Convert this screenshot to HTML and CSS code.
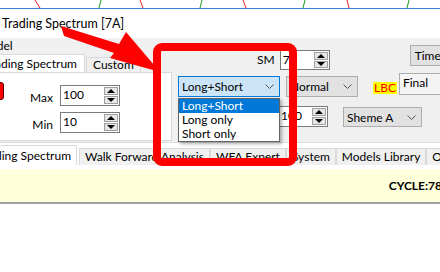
FILE: index.html
```html
<!DOCTYPE html>
<html>
<head>
    <meta charset="UTF-8">
    <title>Trading Spectrum [7A]</title>
    <link rel="stylesheet" href="styles.css">
</head>
<body>
    <div class="chart">
        <svg width="440" height="8" viewBox="0 0 440 8">
            <line x1="35" y1="0" x2="40" y2="8" stroke="#e22" />
            <line x1="101" y1="0" x2="99" y2="8" stroke="#1a9a1a" />
            <line x1="140" y1="0" x2="143" y2="8" stroke="#e22" />
            <line x1="202" y1="0" x2="200" y2="8" stroke="#1a9a1a" />
            <line x1="243" y1="0" x2="246" y2="8" stroke="#e22" />
            <line x1="305" y1="0" x2="303" y2="8" stroke="#1a9a1a" />
            <line x1="347" y1="0" x2="349" y2="8" stroke="#e22" />
            <line x1="409" y1="0" x2="407" y2="8" stroke="#1a9a1a" />
        </svg>
    </div>
    <div class="titlebar">Trading Spectrum [7A]</div>

    <div class="main">
        <div class="left">
            <div class="group-label">Model</div>
            <div class="tabs top-tabs">
                <div class="tab active first">Trading Spectrum</div>
                <div class="tab">Custom</div>
            </div>
            <div class="page">
                <div class="flag"></div>
                <div class="fields">
                    <label>Max</label>
                    <div class="num"><span>100</span><div class="spinbtns"><div class="sb"><i class="up"></i></div><div class="sb"><i class="down"></i></div></div></div>
                    <label>Min</label>
                    <div class="num"><span>10</span><div class="spinbtns"><div class="sb"><i class="up"></i></div><div class="sb"><i class="down"></i></div></div></div>
                </div>
            </div>
        </div>

        <div class="right">
            <div class="row row1">
                <label class="sm-label">SM</label>
                <div class="num sm"><span>7</span><div class="spinbtns"><div class="sb"><i class="up"></i></div><div class="sb"><i class="down"></i></div></div></div>
                <div class="button time">Time</div>
            </div>
            <div class="row row2">
                <div class="combo focused direction"><span>Long+Short</span><svg width="9" height="5"><polyline points="0.5,0.5 4.5,4.5 8.5,0.5" fill="none" stroke="#555" /></svg></div>
                <div class="combo mode"><span>Normal</span><svg width="9" height="5"><polyline points="0.5,0.5 4.5,4.5 8.5,0.5" fill="none" stroke="#555" /></svg></div>
                <span class="lbc">LBC</span>
                <div class="combo edit final"><span>Final</span></div>
            </div>
            <div class="row row3">
                <div class="num period"><span>100</span><div class="spinbtns"><div class="sb"><i class="up"></i></div><div class="sb"><i class="down"></i></div></div></div>
                <div class="combo scheme"><span>Sheme A</span><svg width="9" height="5"><polyline points="0.5,0.5 4.5,4.5 8.5,0.5" fill="none" stroke="#555" /></svg></div>
            </div>
        </div>
    </div>

    <div class="tabs bottom-tabs">
        <div class="tab active first">Trading Spectrum</div>
        <div class="tab">Walk Forward Analysis</div>
        <div class="tab">WFA Expert</div>
        <div class="tab">System</div>
        <div class="tab">Models Library</div>
        <div class="tab">Optimization</div>
    </div>

    <div class="status"><b>CYCLE:78</b></div>

    <!-- open list of the Long+Short combo -->
    <div class="dropdown">
        <div class="item selected">Long+Short</div>
        <div class="item">Long only</div>
        <div class="item">Short only</div>
    </div>

    <!-- annotation drawn over the screenshot -->
    <div class="highlight"></div>
    <svg class="arrow" width="440" height="272" viewBox="0 0 440 272">
        <polygon points="61,26 119,44 126,32 160,72 110,58 114,53 64,36" fill="#f00" />
    </svg>
</body>
</html>
```

FILE: styles.css
```css
body {
    margin: 0;
    width: 440px;
    height: 272px;
    overflow: hidden;
    position: relative;
    background: #fff;
    color: #000;
    font-family: Lato, "Noto Sans", sans-serif;
    font-size: 12px;
}
.chart {
    height: 8px;
    border-bottom: 1px solid #3b83d6;
}
.chart svg {
    display: block;
}
.titlebar {
    height: 29px;
    line-height: 29px;
    padding-left: 2px;
    font-size: 12.5px;
}
.main {
    display: flex;
    height: 104px;
    background: #f0f0f0;
}
.left {
    width: 172px;
    flex: none;
}
.group-label {
    height: 16px;
    line-height: 16px;
    margin-left: -21px;
}
.tabs {
    display: flex;
    align-items: flex-end;
    white-space: nowrap;
}
.tab {
    box-sizing: border-box;
    height: 15px;
    line-height: 14px;
    padding: 0 6px;
    border: 1px solid #d9d9d9;
    border-bottom: none;
    background: #f0f0f0;
}
.tab.active {
    background: #fff;
}
.top-tabs {
    height: 18px;
}
.top-tabs .active {
    height: 18px;
    line-height: 18px;
}
.tab.first {
    width: 112px;
    margin-left: -27px;
    text-align: right;
    padding-right: 7px;
}
.top-tabs .tab + .tab {
    margin-left: 1px;
}
.page {
    box-sizing: border-box;
    height: 69px;
    display: flex;
    background: #fff;
    border: 1px solid #d9d9d9;
    border-left: none;
}
.flag {
    flex: none;
    width: 14px;
    height: 18px;
    margin: 9px 0 0 -10px;
    box-sizing: border-box;
    background: #f00;
    border: 1px solid #500;
    border-radius: 3px;
}
.fields {
    display: grid;
    grid-template-columns: 49px 60px;
    grid-auto-rows: 21px;
    column-gap: 7px;
    row-gap: 6px;
    padding-top: 12px;
    align-items: center;
}
.fields label {
    text-align: right;
    padding-top: 4px;
}
.num {
    box-sizing: border-box;
    height: 21px;
    display: flex;
    background: #fff;
    border: 1px solid #7a7a7a;
}
.num span {
    flex: 1;
    padding-left: 2px;
    line-height: 17px;
}
.spinbtns {
    width: 14px;
    margin: 1px 1px 1px 0;
    display: flex;
    flex-direction: column;
    gap: 1px;
}
.sb {
    flex: 1;
    display: flex;
    align-items: center;
    justify-content: center;
    background: #e6e6e6;
    border: 1px solid #a0a0a0;
}
.sb i {
    width: 0;
    height: 0;
    border-left: 4px solid transparent;
    border-right: 4px solid transparent;
}
.sb .up {
    border-bottom: 4px solid #000;
}
.sb .down {
    border-top: 4px solid #000;
}
.right {
    flex: 1;
    padding-top: 7px;
}
.row {
    display: flex;
    align-items: flex-start;
    white-space: nowrap;
}
.row1 {
    height: 28px;
}
.sm-label {
    margin: 8px 0 0 85px;
    line-height: 14px;
}
.num.sm {
    width: 50px;
    margin: 5px 0 0 5px;
    height: 20px;
}
.button {
    box-sizing: border-box;
    height: 21px;
    line-height: 19px;
    background: #e1e1e1;
    border: 1px solid #adadad;
}
.time {
    width: 50px;
    margin-left: 80px;
    padding-left: 4px;
}
.row2 {
    height: 33px;
}
.combo {
    box-sizing: border-box;
    height: 21px;
    display: flex;
    align-items: center;
    justify-content: space-between;
    padding: 0 5px 0 3px;
    background: #e1e1e1;
    border: 1px solid #adadad;
}
.combo svg {
    display: block;
}
.combo.focused {
    background: #cce4f7;
    border-color: #0078d7;
}
.direction {
    width: 102px;
    margin: 3px 0 0 6px;
}
.mode {
    width: 72px;
    margin: 3px 0 0 6px;
}
.lbc {
    margin: 9px 0 0 15px;
    height: 12px;
    line-height: 12px;
    padding: 0 1px;
    background: #ff0;
    color: #f00;
}
.combo.edit {
    background: #f4f4f4;
    height: 22px;
    padding-left: 3px;
    align-items: flex-start;
    line-height: 18px;
}
.final {
    width: 60px;
    margin-left: 2px;
}
.num.period {
    width: 50px;
    margin-left: 106px;
}
.scheme {
    width: 79px;
    height: 20px;
    margin: 1px 0 0 15px;
}
.bottom-tabs {
    height: 23px;
    background: #fff;
    border-top: 1px solid #dcdcdc;
    box-sizing: border-box;
}
.bottom-tabs .tab {
    height: 17px;
    line-height: 16px;
    padding: 0 5px;
}
.bottom-tabs .active {
    height: 20px;
    line-height: 20px;
    width: 110px;
    margin-right: 2px;
    padding-right: 5px;
}
.status {
    display: flex;
    justify-content: flex-end;
    height: 33px;
    line-height: 33px;
    margin-top: 4px;
    background: #ffffdc;
    border-bottom: 2px solid #a0a0a0;
    white-space: nowrap;
}
.status b {
    margin-right: -2px;
}
.dropdown {
    position: absolute;
    left: 178px;
    top: 98px;
    width: 102px;
    box-sizing: border-box;
    background: #fff;
    border: 1px solid #646464;
    box-shadow: 2px 2px 3px rgba(0, 0, 0, 0.3);
}
.item {
    height: 14px;
    line-height: 14px;
    padding-left: 3px;
}
.item.selected {
    background: #0078d7;
    color: #fff;
}
.highlight {
    position: absolute;
    left: 153px;
    top: 43px;
    width: 144px;
    height: 123px;
    box-sizing: border-box;
    border: 8px solid #f00;
    border-radius: 9px;
}
.arrow {
    position: absolute;
    left: 0;
    top: 0;
}
```
